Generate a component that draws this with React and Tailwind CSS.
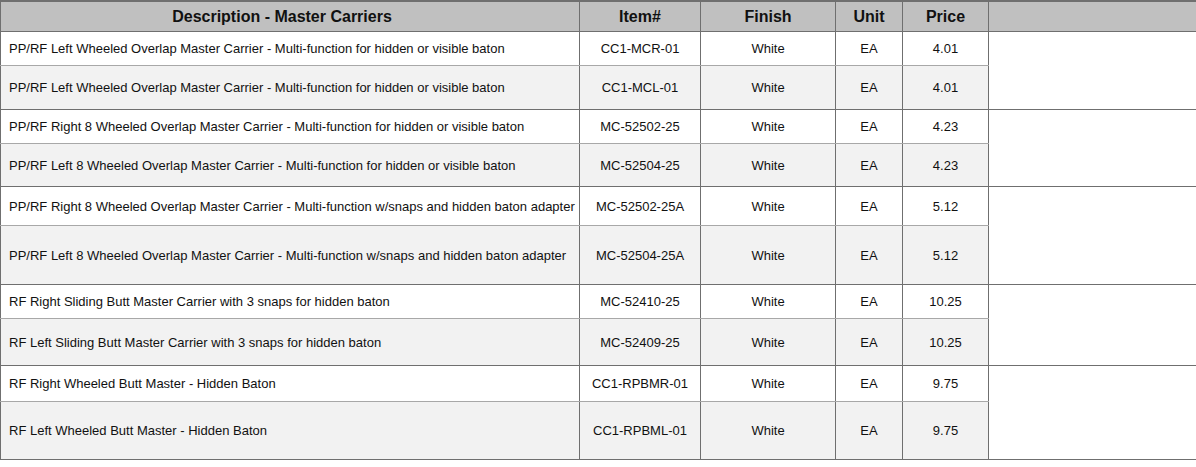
import React from "react";

const rows = [
  ["PP/RF Left Wheeled Overlap Master Carrier - Multi-function for hidden or visible baton", "CC1-MCR-01", "4.01", 34],
  ["PP/RF Left Wheeled Overlap Master Carrier - Multi-function for hidden or visible baton", "CC1-MCL-01", "4.01", 44],
  ["PP/RF Right 8 Wheeled Overlap Master Carrier - Multi-function for hidden or visible baton", "MC-52502-25", "4.23", 34],
  ["PP/RF Left 8 Wheeled Overlap Master Carrier - Multi-function for hidden or visible baton", "MC-52504-25", "4.23", 43],
  ["PP/RF Right 8 Wheeled Overlap Master Carrier - Multi-function w/snaps and hidden baton adapter", "MC-52502-25A", "5.12", 39],
  ["PP/RF Left 8 Wheeled Overlap Master Carrier - Multi-function w/snaps and hidden baton adapter", "MC-52504-25A", "5.12", 59],
  ["RF Right Sliding Butt Master Carrier with 3 snaps for hidden baton", "MC-52410-25", "10.25", 34],
  ["RF Left Sliding Butt Master Carrier with 3 snaps for hidden baton", "MC-52409-25", "10.25", 47],
  ["RF Right Wheeled Butt Master - Hidden Baton", "CC1-RPBMR-01", "9.75", 36],
  ["RF Left Wheeled Butt Master - Hidden Baton", "CC1-RPBML-01", "9.75", 58],
];

export default function App() {
  return (
    <div
      className="w-[1196px] h-[467px] bg-white overflow-hidden text-[#111] text-[13px]"
      style={{ fontFamily: '"Liberation Sans", Arial, sans-serif' }}
    >
      <table className="border-collapse table-fixed w-[1196px] border-t-2 border-l border-[#6f6f6f]">
        <colgroup>
          <col className="w-[579px]" />
          <col className="w-[121px]" />
          <col className="w-[135px]" />
          <col className="w-[67px]" />
          <col className="w-[86px]" />
          <col className="w-[208px]" />
        </colgroup>
        <thead>
          <tr className="h-[30px] bg-[#c0c0c0] font-bold text-[16px]">
            <th className="border border-[#6f6f6f] text-center font-bold pt-[2px] pr-[16px]">Description - Master Carriers</th>
            <th className="border border-[#6f6f6f] text-center font-bold pt-[2px]">Item#</th>
            <th className="border border-[#6f6f6f] text-center font-bold pt-[2px]">Finish</th>
            <th className="border border-[#6f6f6f] text-center font-bold pt-[2px]">Unit</th>
            <th className="border border-[#6f6f6f] text-center font-bold pt-[2px]">Price</th>
            <th className="border border-[#6f6f6f] border-r-[#c0c0c0]"></th>
          </tr>
        </thead>
        <tbody>
          {rows.map(([desc, item, price, h], i) => {
            const even = i % 2 === 1;
            const bg = even ? "bg-[#f2f2f2]" : "bg-white";
            const hb = even ? "border-b-[#6f6f6f]" : "border-b-[#a8a8a8]";
            return (
              <tr key={i} className={bg} style={{ height: h }}>
                <td className={`border border-[#6f6f6f] ${hb} pl-[8px] pt-[2px] text-left whitespace-nowrap`}>{desc}</td>
                <td className={`border border-[#6f6f6f] ${hb} pt-[2px] text-center whitespace-nowrap`}>{item}</td>
                <td className={`border border-[#6f6f6f] ${hb} pt-[2px] text-center`}>White</td>
                <td className={`border border-[#6f6f6f] ${hb} pt-[2px] text-center`}>EA</td>
                <td className={`border border-[#6f6f6f] ${hb} pt-[2px] text-center`}>{price}</td>
                {!even && (
                  <td rowSpan={2} className="border border-[#6f6f6f] border-r-[#c8c8c8] bg-white"></td>
                )}
              </tr>
            );
          })}
        </tbody>
      </table>
    </div>
  );
}
